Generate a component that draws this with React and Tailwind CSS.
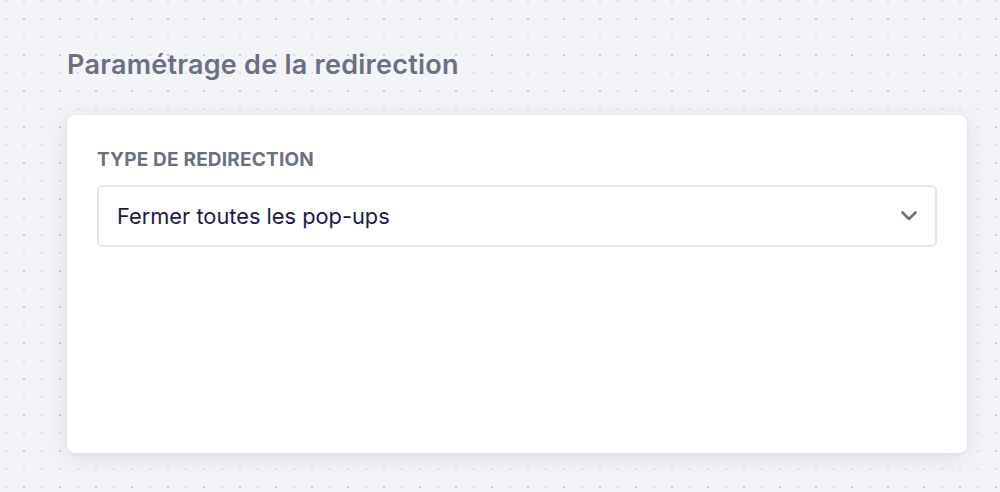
import React from "react";

export default function App() {
  return (
    <div
      className="w-[1000px] h-[492px] overflow-hidden bg-[#f3f4f8] [background-image:radial-gradient(circle,#c5c7cf_1px,transparent_1.3px),radial-gradient(circle,#dfe1e7_1px,transparent_1.3px)] [background-size:36px_36px,18px_18px] [background-position:6px_1px,-3px_-8px] pt-[46px] pl-[67px] pr-[33px] [font-family:Inter,'Liberation_Sans',sans-serif]"
    >
      <h1 className="text-[27px] leading-[38px] font-semibold text-[#6b7081] tracking-[0.25px]">
        Paramétrage de la redirection
      </h1>
      <div className="mt-[31px] w-[900px] h-[338px] bg-white rounded-lg shadow-[0_4px_24px_rgba(30,35,60,0.10),0_1px_4px_rgba(30,35,60,0.05)] pt-[33px] px-[30px]">
        <div className="text-[19px] leading-[24px] font-bold uppercase text-[#6b7081] tracking-[0.2px]">
          Type de redirection
        </div>
        <div className="mt-[13px] h-[62px] border-2 border-[#e4e6eb] rounded-md flex items-center justify-between pl-[18px] pr-[16px]">
          <span className="text-[21.8px] text-[#1b1a4a]">Fermer toutes les pop-ups</span>
          <svg width="20" height="20" viewBox="0 0 20 20" fill="none">
            <path d="M3.5 6.5 L10 13 L16.5 6.5" stroke="#6b7081" strokeWidth="2.6" strokeLinecap="round" strokeLinejoin="round" />
          </svg>
        </div>
      </div>
    </div>
  );
}
